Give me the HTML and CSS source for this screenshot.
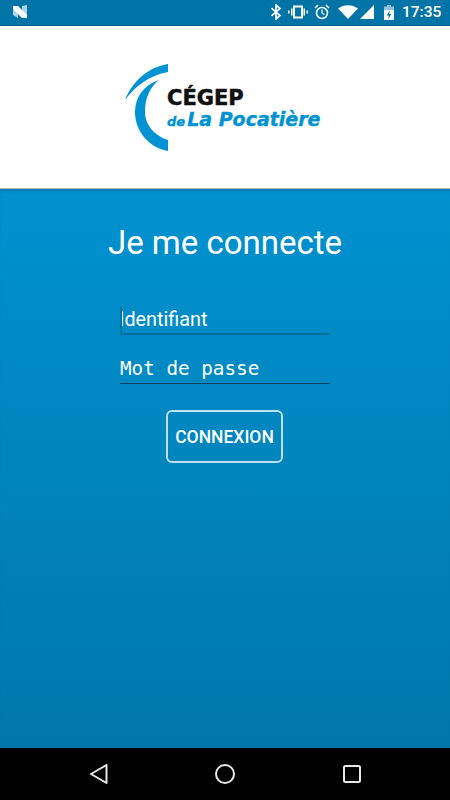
FILE: index.html
```html
<!DOCTYPE html>
<html lang="fr">
<head>
<meta charset="utf-8">
<title>Je me connecte</title>
<link rel="stylesheet" href="styles.css">
</head>
<body>
<div class="phone">
  <div class="statusbar">
    <svg class="n-icon" width="16" height="14" viewBox="0 0 16 14">
      <path d="M1 1l5 3v9l-5-3z" fill="#a9d3e6"/>
      <path d="M10 1l5-1v13l-5-3z" fill="#a9d3e6"/>
      <path d="M1 1h5l9 9v3h-5L1 4z" fill="#fff"/>
    </svg>
    <div class="status-right">
      <svg width="12" height="16" viewBox="0 0 12 16"><path d="M1.500 4.200L10 11.500 6 15V1l4 3.500L1.500 11.800" fill="none" stroke="#fff" stroke-width="1.700"/></svg>
      <svg width="20" height="14" viewBox="0 0 20 14"><path d="M6 1.500h8v11H6z" fill="none" stroke="#fff" stroke-width="2"/><path d="M3 3.500h1.500v7H3zM15.500 3.500H17v7h-1.500zM0 5.500h1.500v3H0zM18.500 5.500H20v3h-1.500z" fill="#fff"/></svg>
      <svg width="16" height="16" viewBox="0 0 16 16"><circle cx="8" cy="9" r="5.500" fill="none" stroke="#fff" stroke-width="1.500"/><path d="M8 5.500V9l2.500 1.500" fill="none" stroke="#fff" stroke-width="1.200"/><path d="M1 4l3-3M15 4l-3-3" stroke="#fff" stroke-width="1.500"/></svg>
      <svg class="wifi" width="20" height="14" viewBox="0 0 20 14"><path d="M0 3.500C5.500-1 14.500-1 20 3.500L10 14z" fill="#fff"/></svg>
      <svg class="signal" width="14" height="14" viewBox="0 0 14 14"><path d="M14 0v14H0z" fill="#fff"/></svg>
      <svg class="battery" width="10" height="15" viewBox="0 0 10 15"><path d="M3 0h4v1.500h3V5H0V1.500h3z" fill="#8fc4dc"/><path d="M0 5h10v10H0z" fill="#fff"/><path d="M5.800 5.500L2.800 10.500h2l-.6 4 3-5.500h-2z" fill="#0074a6"/></svg>
      <span class="clock">17:35</span>
    </div>
  </div>

  <header class="brand">
    <div class="logo">
      <svg class="logo-arcs" width="44" height="88" viewBox="0 0 44 88">
        <path d="M43 0C23 3 7 18 0 36 10 22 25 11 43 8z" fill="#0093d3"/>
        <path d="M34 16C18 21 10 34 10 48 10 68 25 84 43 87V76C30 72 20 61 20 48 20 34 25 23 34 16z" fill="#0093d3"/>
      </svg>
      <div class="logo-text">
        <div class="logo-cegep">CÉGEP</div>
        <div class="logo-name"><span class="logo-de">de</span><span class="logo-place">La Pocatière</span></div>
      </div>
    </div>
  </header>

  <main class="login">
    <h1 class="title">Je me connecte</h1>
    <div class="field field-active">Identifiant</div>
    <div class="field field-mono">Mot de passe</div>
    <button class="submit" type="button">CONNEXION</button>
  </main>

  <nav class="navbar">
    <svg width="20" height="22" viewBox="0 0 20 22"><path d="M17.500 2v18L2 11z" fill="none" stroke="#e8e8e8" stroke-width="2" stroke-linejoin="round"/></svg>
    <svg class="home" width="22" height="22" viewBox="0 0 22 22"><circle cx="11" cy="11" r="9" fill="none" stroke="#e8e8e8" stroke-width="2"/></svg>
    <svg width="20" height="20" viewBox="0 0 20 20"><rect x="2" y="2" width="16" height="16" rx="1.500" fill="none" stroke="#e8e8e8" stroke-width="2"/></svg>
  </nav>
</div>
</body>
</html>
```
FILE: styles.css
```css
* { box-sizing: border-box; }
html, body { margin: 0; padding: 0; }
body { font-family: Roboto, "Liberation Sans", sans-serif; background: #000; }

.phone {
  width: 450px;
  height: 800px;
  display: flex;
  flex-direction: column;
  overflow: hidden;
}

.statusbar {
  height: 26px;
  flex: none;
  background: #0074a6;
  border-bottom: 1px solid #00598a;
  display: flex;
  align-items: center;
  justify-content: space-between;
  padding: 0 8px 1px 12px;
}
.status-right { display: flex; align-items: center; gap: 6px; }
.status-right .wifi { margin-left: 2px; margin-right: -4px; }
.status-right .battery { margin-left: 4px; }
.clock { color: #fff; font-size: 15.500px; font-weight: 500; margin-left: 2px; width: 40px; }

.brand {
  height: 162px;
  flex: none;
  background: #fff;
  display: flex;
  padding: 38px 0 0 125px;
}
.logo { display: flex; align-items: flex-start; height: 88px; }
.logo-arcs { flex: none; }
.logo-text { margin: 24px 0 0 -2px; font-family: "DejaVu Sans", sans-serif; font-weight: 700; }
.logo-cegep {
  font-size: 21px;
  line-height: 21px;
  color: #111;
  -webkit-text-stroke: 0.500px #111;
}
.logo-name {
  color: #0093d3;
  line-height: 20px;
  white-space: nowrap;
  font-style: italic;
  display: flex;
  align-items: baseline;
  gap: 2px;
  -webkit-text-stroke: 0.400px #0093d3;
}
.logo-de { font-size: 13px; }
.logo-place { font-size: 19px; }

.login {
  flex: 1;
  background: linear-gradient(#0092d0, #0077aa);
  box-shadow: inset 0 4px 3px -2px rgba(0, 70, 110, .35);
  border-top: 1px solid #b5b5b5;
  display: flex;
  flex-direction: column;
  align-items: center;
  color: #fff;
}
.title {
  margin: 35px 0 0;
  font-size: 33px;
  line-height: 38px;
  font-weight: 400;
}
.field {
  position: relative;
  width: 210px;
  font-size: 19.800px;
  line-height: 30px;
  height: 30px;
  border-bottom: 1px solid #04405f;
  white-space: nowrap;
}
.field-active {
  margin-top: 43px;
  border-bottom: 2px solid #006f9f;
  text-indent: -1px;
}
.field-active::before {
  content: "";
  position: absolute;
  left: 0;
  top: 2px;
  width: 2px;
  height: 26px;
  background: #0074a6;
}
.field-mono {
  margin-top: 19px;
  font-family: "DejaVu Sans Mono", monospace;
  font-size: 19.300px;
}
.submit {
  margin: 26px 1px 0 0;
  width: 117px;
  height: 53px;
  background: transparent;
  border: 2px solid rgba(255, 255, 255, .75);
  border-radius: 6px;
  color: #fff;
  font-family: inherit;
  font-size: 17.500px;
  font-weight: 500;
  padding: 0;
}

.navbar {
  height: 52px;
  flex: none;
  background: #000;
  display: flex;
  align-items: center;
  justify-content: space-between;
  padding: 0 88px 1px 89px;
}
.home { margin-right: 2px; }
```
